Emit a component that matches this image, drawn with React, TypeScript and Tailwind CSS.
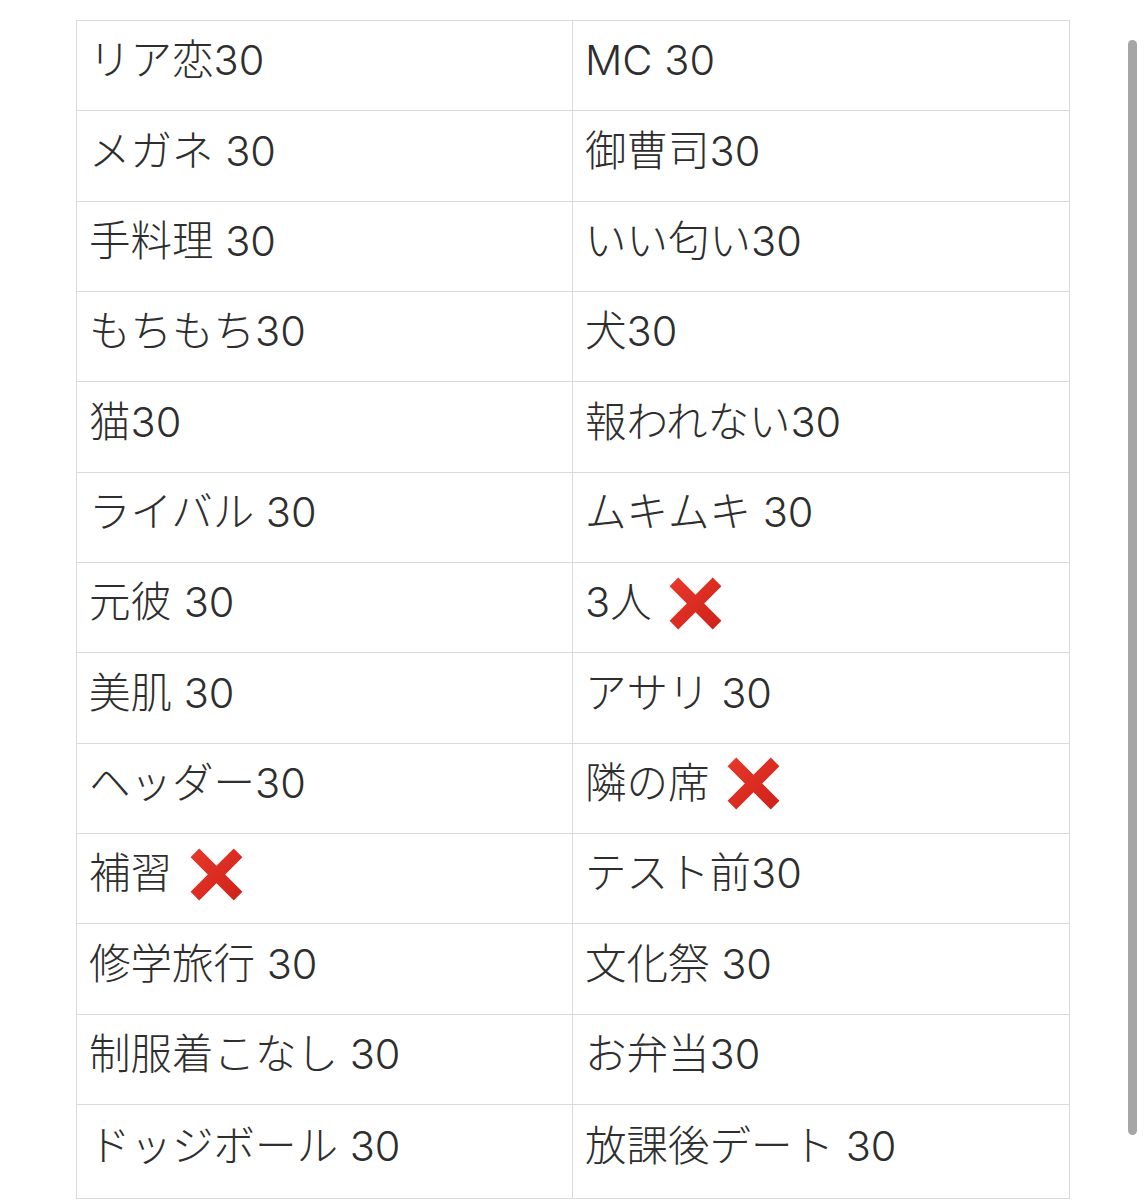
const rows: [string, string][] = [
  ['リア恋30', 'MC 30'],
  ['メガネ 30', '御曹司30'],
  ['手料理 30', 'いい匂い30'],
  ['もちもち30', '犬30'],
  ['猫30', '報われない30'],
  ['ライバル 30', 'ムキムキ 30'],
  ['元彼 30', '3人 ❌'],
  ['美肌 30', 'アサリ 30'],
  ['ヘッダー30', '隣の席 ❌'],
  ['補習 ❌', 'テスト前30'],
  ['修学旅行 30', '文化祭 30'],
  ['制服着こなし 30', 'お弁当30'],
  ['ドッジボール 30', '放課後デート 30'],
]

function Cross() {
  return (
    <svg viewBox="0 0 54 54" className="w-[53px] h-[53px] ml-[6px] shrink-0">
      <defs>
        <linearGradient id="xg" x1="0" y1="0" x2="1" y2="1">
          <stop offset="0" stopColor="#e6362a" />
          <stop offset="1" stopColor="#d0231a" />
        </linearGradient>
      </defs>
      <path d="M5 5 L49 49 M49 5 L5 49" stroke="url(#xg)" strokeWidth="12.5" strokeLinecap="butt" />
    </svg>
  )
}

function Cell({ text }: { text: string }) {
  const hasCross = text.includes('❌')
  const label = text.replace('❌', '').trimEnd()
  return (
    <div className="flex items-center px-3 pb-[9px] border-b border-r border-[#dadada]">
      <span className="whitespace-pre">{label}{hasCross ? ' ' : ''}</span>
      {hasCross && <Cross />}
    </div>
  )
}

export default function App() {
  return (
    <div
      className="relative w-[1146px] h-[1200px] overflow-hidden bg-white text-[#2e2e2e] text-[41.5px] leading-none font-light"
      style={{ fontFamily: 'Inter, "Noto Sans CJK JP", "Noto Sans", sans-serif' }}
    >
      <div className="ml-[76px] mt-[20px] w-[994px] border-t border-l border-[#dadada]">
        {rows.map((row, i) => (
          <div
            key={i}
            className={`grid grid-cols-[496px_1fr] ${i === rows.length - 1 ? 'h-[94px]' : 'h-[90.33px]'}`}
          >
            <Cell text={row[0]} />
            <Cell text={row[1]} />
          </div>
        ))}
      </div>

      {/* scroll indicator */}
      <div className="absolute left-[1128px] top-[40px] w-[9px] h-[1095px] rounded-full bg-[#a6a6a6]" />
    </div>
  )
}
